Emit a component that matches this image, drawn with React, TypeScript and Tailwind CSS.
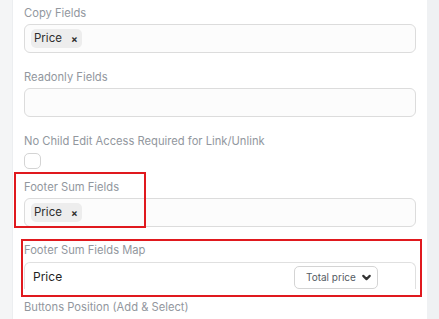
import { ChevronDown } from 'lucide-react';

function Label({ children, className = '' }: { children: React.ReactNode; className?: string }) {
  return <div className={`text-[11.2px] leading-4 text-[#92979e] ${className}`}>{children}</div>;
}

function Chip({ text }: { text: string }) {
  return (
    <span className="inline-flex items-center h-[19px] rounded-[5px] bg-[#ededed] pl-[3px] pr-[4px] text-[11.5px] text-[#2f2f2f]">
      {text}
      <span className="ml-[9px] text-[10px] font-bold leading-none">×</span>
    </span>
  );
}

function Input({ children }: { children?: React.ReactNode }) {
  return (
    <div className="h-[29px] flex items-center px-[6px] rounded-[6px] border border-[#dcdcdc] bg-[#fcfcfc]">
      {children}
    </div>
  );
}

export default function App() {
  return (
    <div className="relative flex w-[439px] h-[319px] overflow-hidden bg-[#eff1f3]" style={{ fontFamily: 'Inter, "Noto Sans", sans-serif' }}>
      <div className="w-[12px] bg-[#f4f5f6]" />
      <div className="w-[415px] bg-white border-l border-[#eceef0] px-[11px] pt-[5px]">
        <Label className="mb-[3px]">Copy Fields</Label>
        <Input>
          <Chip text="Price" />
        </Input>

        <Label className="mt-[16px] mb-[3px]">Readonly Fields</Label>
        <Input />

        <Label className="mt-[16px] mb-[4px]">No Child Edit Access Required for Link/Unlink</Label>
        <div className="w-[17px] h-[16px] rounded-[5px] border border-[#d4d4d4] bg-white" />

        <Label className="mt-[10px] mb-[3px]">Footer Sum Fields</Label>
        <Input>
          <Chip text="Price" />
        </Input>

        <Label className="mt-[15px] mb-[4px]">Footer Sum Fields Map</Label>
        <div className="h-[27px] flex items-center justify-between rounded-t-[6px] border border-b-0 border-[#e0e0e0] pl-[8px] pr-[37px] pt-[2px]">
          <span className="text-[12px] text-[#1f1f1f]">Price</span>
          <div className="w-[84px] h-[23px] mt-[1px] flex items-center justify-between rounded-[5px] border border-[#d4d4d4] bg-white pl-[11px] pr-[4px]">
            <span className="text-[10px] text-[#555b63]">Total price</span>
            <ChevronDown className="w-[13px] h-[13px] text-[#333]" strokeWidth={4} />
          </div>
        </div>

        <Label className="mt-[10px]">Buttons Position (Add &amp; Select)</Label>
      </div>

      <div className="absolute left-[14px] top-[172px] w-[132px] h-[56px] border-2 border-[#e0191e]" />
      <div className="absolute left-[21px] top-[239px] w-[401px] h-[58px] border-2 border-[#e0191e]" />
    </div>
  );
}
